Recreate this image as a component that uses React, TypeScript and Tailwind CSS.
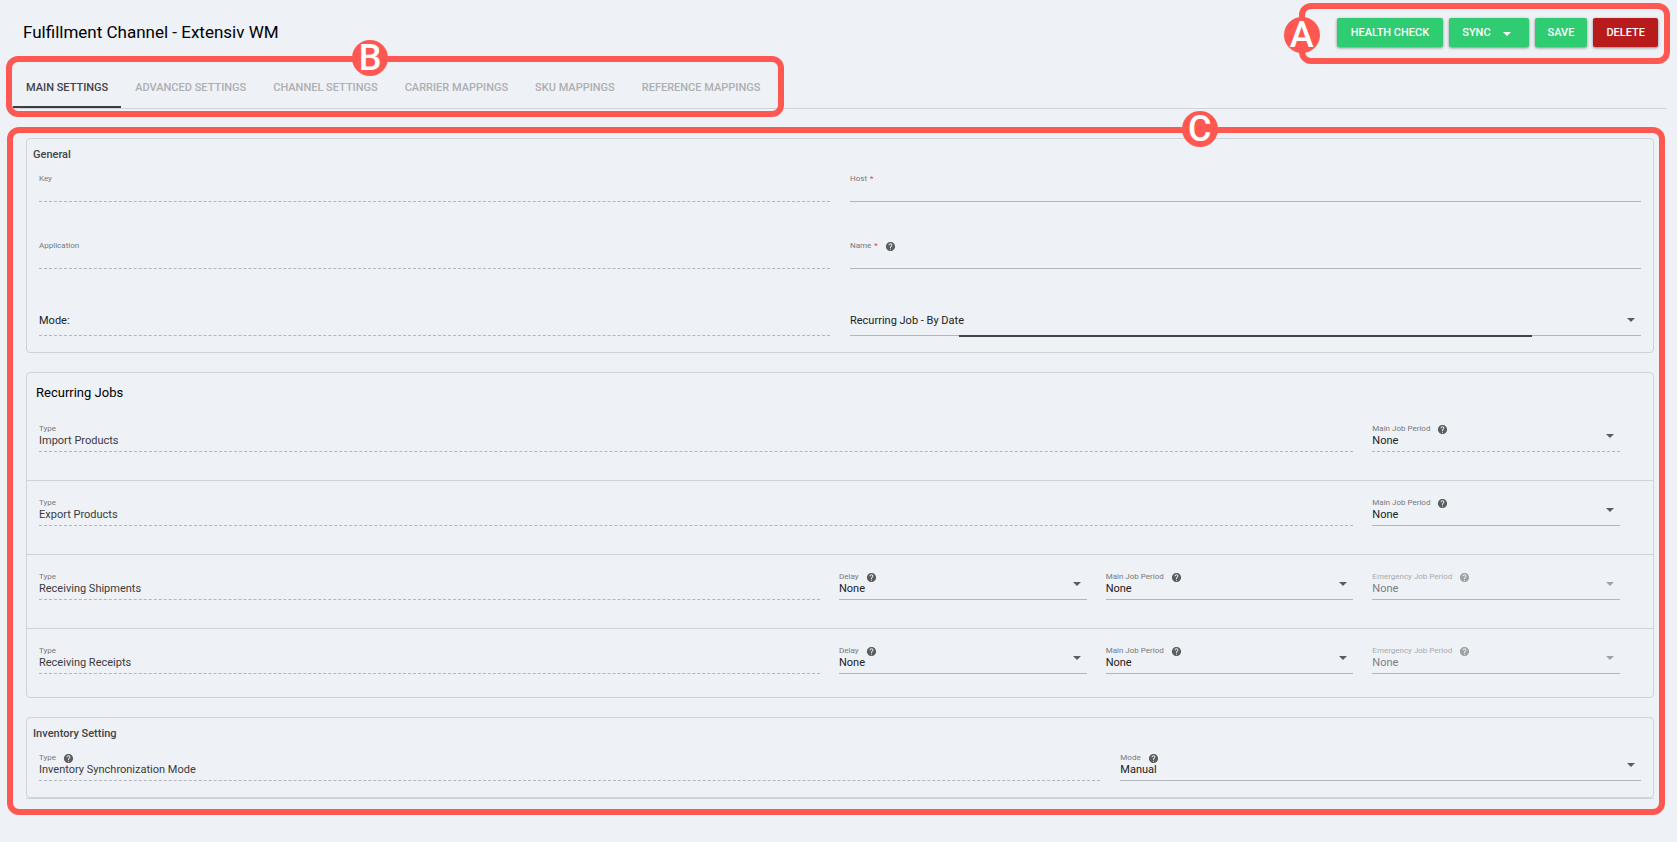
import { useId } from 'react';
import { MdHelp } from 'react-icons/md';
import clsx from 'clsx';

interface FieldProps {
  label: string;
  value?: string;
  required?: boolean;
  help?: boolean;
  dashed?: boolean;
  disabled?: boolean;
  hideLabel?: boolean;
  focused?: boolean;
  className?: string;
}

interface Job {
  type: string;
  periods: { label: string; disabled?: boolean; dashed?: boolean }[];
}

const TABS = [
  'Main Settings',
  'Advanced Settings',
  'Channel Settings',
  'Carrier Mappings',
  'SKU Mappings',
  'Reference Mappings',
];

const RECEIVING_PERIODS = [
  { label: 'Delay' },
  { label: 'Main Job Period' },
  { label: 'Emergency Job Period', disabled: true },
];

const JOBS: Job[] = [
  { type: 'Import Products', periods: [{ label: 'Main Job Period', dashed: true }] },
  { type: 'Export Products', periods: [{ label: 'Main Job Period' }] },
  { type: 'Receiving Shipments', periods: RECEIVING_PERIODS },
  { type: 'Receiving Receipts', periods: RECEIVING_PERIODS },
];

function Caret({ className }: { className?: string }) {
  return (
    <svg viewBox="0 0 8 4" className={clsx('h-1 w-2 fill-current', className)} aria-hidden="true">
      <path d="M0 0h8L4 4z" />
    </svg>
  );
}

function FieldLabel({ id, label, required, help, disabled }: FieldProps & { id: string }) {
  return (
    <div className={clsx('flex h-[10px] items-center text-[8px] leading-[10px]', disabled ? 'text-[#a9abae]' : 'text-[#77797c]')}>
      <label htmlFor={id}>
        {label}
        {required && <span className="ml-[3px] text-[#e5394a]">*</span>}
      </label>
      {help && <MdHelp className={clsx('ml-[7px] size-[11px]', disabled ? 'text-[#a0a1a3]' : 'text-[#5c5d5f]')} />}
    </div>
  );
}

function TextField(props: FieldProps) {
  const id = useId();
  return (
    <div className={clsx('border-b border-[#b3b6ba]', props.dashed && 'border-dashed', props.className)}>
      {!props.hideLabel && <FieldLabel {...props} id={id} />}
      <input
        id={id}
        type="text"
        defaultValue={props.value}
        readOnly={props.dashed}
        aria-label={props.hideLabel ? props.label : undefined}
        className={clsx(
          'block w-full bg-transparent text-[11px] leading-3 outline-none',
          props.hideLabel ? 'h-[21px] pb-[9px] text-[#212224]' : 'h-[17px] pb-[5px] text-[#3a3b3d]',
        )}
      />
    </div>
  );
}

function SelectField(props: FieldProps) {
  const id = useId();
  return (
    <div className={clsx('relative border-b border-[#b3b6ba]', props.dashed && 'border-dashed', props.className)}>
      {!props.hideLabel && <FieldLabel {...props} id={id} />}
      <select
        id={id}
        disabled={props.disabled}
        defaultValue={props.value}
        aria-label={props.hideLabel ? props.label : undefined}
        className={clsx(
          'block w-full appearance-none bg-transparent text-[11px] leading-3 outline-none',
          props.hideLabel ? 'h-[21px] pb-[7px]' : 'h-[17px] pb-[3px]',
          props.disabled ? 'text-[#7d7e80] opacity-100' : 'text-[#212224]',
        )}
      >
        <option>{props.value}</option>
      </select>
      <Caret
        className={clsx('pointer-events-none absolute right-[6px] bottom-[13px]', props.disabled ? 'text-[#a0a1a3]' : 'text-[#5c5d5f]')}
      />
      {props.focused && <div className="absolute right-[109px] -bottom-[2px] left-[109px] h-[2px] bg-[#424446]" />}
    </div>
  );
}

function Marker({ letter, className }: { letter: string; className: string }) {
  return (
    <span
      className={clsx(
        'absolute flex size-9 items-center justify-center rounded-full bg-[#ff5852] text-[36px] leading-none font-medium text-white',
        className,
      )}
    >
      {letter}
    </span>
  );
}

export default function App() {
  return (
    <div className="min-h-screen bg-[#eef1f6] font-[Roboto,'Liberation_Sans',sans-serif] text-black">
      <header className="flex items-start justify-between pt-[3px] pr-[7px] pl-[23px]">
        <h1 className="pt-[18px] text-[17px] leading-[22px]">Fulfillment Channel - Extensiv WM</h1>
        <div className="relative flex gap-[6px] rounded-xl border-[6px] border-[#ff5852] pt-[9px] pr-[6px] pb-[11px] pl-8 text-[11px] font-medium text-white">
          <Marker letter="A" className="top-[8px] -left-[21px]" />
          <button className="h-[29px] rounded-xs bg-[#2fcc71] px-[14px] pt-0.5 shadow-[0_1px_3px_rgba(0,0,0,0.45)]">HEALTH CHECK</button>
          <button className="flex h-[29px] items-center gap-3 rounded-xs bg-[#2fcc71] pt-0.5 pr-[18px] pl-[13px] shadow-[0_1px_3px_rgba(0,0,0,0.45)]">
            SYNC
            <Caret />
          </button>
          <button className="h-[29px] rounded-xs bg-[#2fcc71] px-[13px] pt-0.5 shadow-[0_1px_3px_rgba(0,0,0,0.45)]">SAVE</button>
          <button className="h-[29px] rounded-xs bg-[#b71b1c] px-[13px] pt-0.5 shadow-[0_1px_3px_rgba(0,0,0,0.45)]">DELETE</button>
        </div>
      </header>

      <div className="relative -mt-2 pr-[10px] pl-[6px]">
        <div className="absolute right-[10px] bottom-[8px] left-[12px] h-px bg-[#cfd2d7]" />
        <nav className="relative flex w-fit gap-px rounded-xl border-[6px] border-[#ff5852] pr-[5px] pl-px">
          <Marker letter="B" className="-top-[22px] left-[340px]" />
          {TABS.map((tab, i) => (
            <button
              key={tab}
              className={clsx(
                'mb-[3px] h-[46px] border-b-2 px-[13px] pt-[9px] text-[11px] font-medium uppercase',
                i === 0 ? 'border-[#3c3e41] text-[#424446]' : 'border-transparent text-[#adafb2]',
              )}
            >
              {tab}
            </button>
          ))}
        </nav>
      </div>

      <main className="relative mt-[10px] mr-3 ml-[7px] rounded-xl border-[6px] border-[#ff5852] pt-[5px] pr-[5px] pb-[10px] pl-[13px]">
        <Marker letter="C" className="-top-[22px] left-[71%]" />
        <div className="flex flex-col gap-[19px] border-b border-[#cfd2d7]">
          <section className="rounded border border-[#cfd2d7] pb-4">
            <h2 className="px-[6px] pt-[9px] text-[11px] leading-[14px] font-medium text-[#424446]">General</h2>
            <div className="grid grid-cols-2 gap-x-5 gap-y-[39px] px-3 pt-3">
              <TextField label="Key" dashed />
              <TextField label="Host" required />
              <TextField label="Application" dashed />
              <TextField label="Name" required help />
              <TextField label="Mode label" value="Mode:" dashed hideLabel className="pt-[6px]" />
              <SelectField label="Mode" value="Recurring Job - By Date" hideLabel focused className="pt-[6px]" />
            </div>
          </section>

          <section className="rounded border border-[#cfd2d7] pb-[23px]">
            <h2 className="px-[9px] pt-3 text-[13px] leading-4">Recurring Jobs</h2>
            {JOBS.map((job, i) => (
              <div
                key={job.type}
                className={clsx(
                  'grid grid-cols-6 gap-x-[19px] pr-[33px] pl-3',
                  i === 0 ? 'pt-[23px]' : 'border-t border-[#cfd2d7] pt-[17px]',
                  i < JOBS.length - 1 && 'pb-7',
                )}
              >
                <TextField label="Type" value={job.type} dashed className={job.periods.length === 1 ? 'col-span-5' : 'col-span-3'} />
                {job.periods.map(period => (
                  <SelectField key={period.label} {...period} value="None" help />
                ))}
              </div>
            ))}
          </section>

          <section className="rounded border border-[#cfd2d7] pb-4">
            <h2 className="px-[6px] pt-[9px] text-[11px] leading-[14px] font-medium text-[#424446]">Inventory Setting</h2>
            <div className="grid grid-cols-3 gap-x-5 px-3 pt-3">
              <TextField label="Type" value="Inventory Synchronization Mode" help dashed className="col-span-2" />
              <SelectField label="Mode" value="Manual" help />
            </div>
          </section>
        </div>
      </main>
    </div>
  );
}
